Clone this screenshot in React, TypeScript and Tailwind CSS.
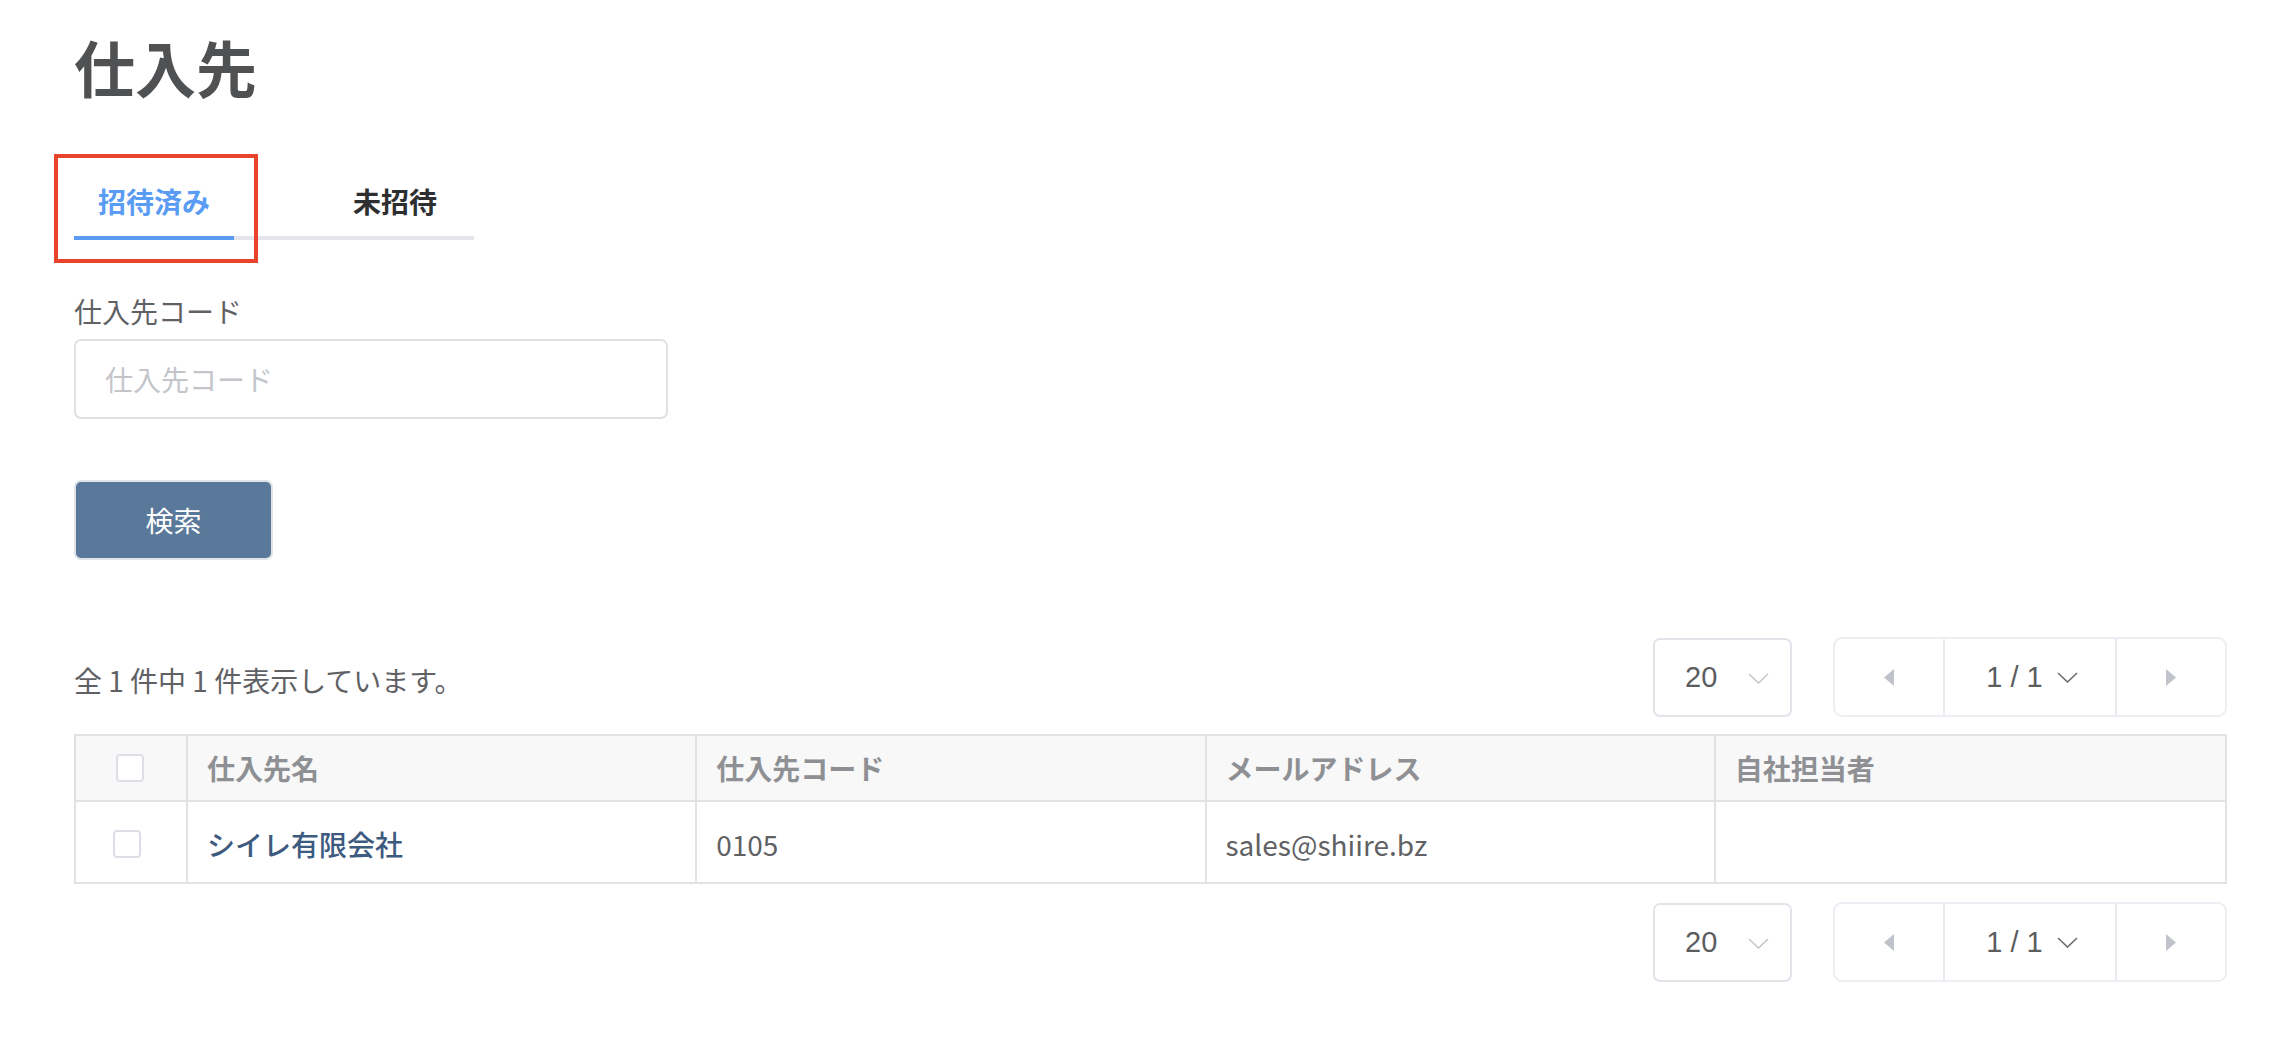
import React from "react";

const jp = { fontFamily: '"Noto Sans CJK JP", "Noto Sans", sans-serif' };

function Chevron({ color, w = 21, h = 11 }: { color: string; w?: number; h?: number }) {
  return (
    <svg width={w} height={h} viewBox="0 0 21 11" fill="none">
      <polyline points="1,1 10.5,10 20,1" stroke={color} strokeWidth="1.6" fill="none" />
    </svg>
  );
}

function Pagination() {
  return (
    <div className="flex items-center gap-[41px]" style={{ fontFamily: '"Liberation Sans", Arial, sans-serif' }}>
      <div className="flex h-[79px] w-[139px] items-center rounded-[7px] border-2 border-[#e2e4ea] pl-[30px]">
        <span className="text-[29px] leading-none text-[#5b5d61]">20</span>
        <span className="ml-[31px] mt-[2px]">
          <Chevron color="#c4c7cd" />
        </span>
      </div>
      <div className="flex h-[80px] w-[394px] overflow-hidden rounded-[9px] border-2 border-[#eceef3]">
        <div className="flex w-[108px] items-center justify-center">
          <svg width="10" height="17" viewBox="0 0 10 17">
            <polygon points="10,0 10,17 0,8.5" fill="#c0c3c9" />
          </svg>
        </div>
        <div className="-my-[2px] flex w-[174px] items-center justify-center border-x-2 border-y-2 border-x-[#e8eaef] border-y-[#dcdee4] pl-[4px]">
          <span className="text-[29px] leading-none text-[#5b5d61]">1 / 1</span>
          <span className="ml-[14px] mt-[1px]">
            <Chevron color="#6a6c70" />
          </span>
        </div>
        <div className="flex flex-1 items-center justify-center">
          <svg width="10" height="17" viewBox="0 0 10 17">
            <polygon points="0,0 10,8.5 0,17" fill="#c0c3c9" />
          </svg>
        </div>
      </div>
    </div>
  );
}

function Checkbox() {
  return <div className="h-[28px] w-[28px] rounded-[4px] border-2 border-[#dcdfe6] bg-white" />;
}

export default function App() {
  const cols = "grid grid-cols-[112px_repeat(4,minmax(0,1fr))]";
  return (
    <div className="min-h-[1038px] w-[2280px] bg-white pl-[74px] pr-[53px] pt-[36px]" style={jp}>
      <h1 className="text-[61px] font-bold leading-[62px] text-[#505153]">仕入先</h1>

      <div className="mt-[74px] flex w-[400px] border-b-4 border-[#e4e5ea]">
        <div className="relative -mb-[4px] w-[160px] border-b-4 border-[#5a9cf3] pb-[21px] pt-[15px] text-center text-[28px] font-semibold leading-[28px] text-[#5a9cf3]">
          招待済み
          <div className="pointer-events-none absolute left-[-20px] top-[-18px] h-[109px] w-[204px] border-4 border-[#e8432d]" />
        </div>
        <div className="pb-[21px] pl-[119px] pt-[15px] text-[28px] font-semibold leading-[28px] text-[#2e2f31]">未招待</div>
      </div>

      <div className="mt-[57px] text-[28px] leading-[28px] text-[#5f6164]">仕入先コード</div>
      <div className="mt-[14px] flex h-[80px] w-[594px] items-center rounded-[7px] border-2 border-[#dfe1e6] pl-[29px] text-[28px] text-[#c3c5ca]">
        仕入先コード
      </div>

      <button className="mt-[61px] flex h-[80px] w-[199px] items-center justify-center rounded-[7px] border-2 border-[#dfe2e8] bg-[#5a7899] text-[28px] text-white">
        検索
      </button>

      <div className="mt-[76px] flex h-[82px] items-center justify-between">
        <div className="pt-[5px] text-[28px] text-[#5f6164]">全 1 件中 1 件表示しています。</div>
        <Pagination />
      </div>

      <div className="mt-[16px] border-2 border-[#e2e2e4] text-[28px]">
        <div className={`${cols} h-[66px] border-b-2 border-[#e2e2e4] bg-[#f8f8f9] font-bold text-[#8e9094]`}>
          <div className="flex items-center justify-center border-r-2 border-[#e2e2e4] pr-[2px]">
            <Checkbox />
          </div>
          <div className="flex items-center border-r-2 border-[#e2e2e4] pl-[19px]">仕入先名</div>
          <div className="flex items-center border-r-2 border-[#e2e2e4] pl-[19px]">仕入先コード</div>
          <div className="flex items-center border-r-2 border-[#e2e2e4] pl-[19px]">メールアドレス</div>
          <div className="flex items-center pl-[19px]">自社担当者</div>
        </div>
        <div className={`${cols} h-[80px] text-[#5f6164]`}>
          <div className="flex items-center border-r-2 border-[#e2e2e4] pl-[37px] pt-[4px]">
            <Checkbox />
          </div>
          <div className="flex items-center border-r-2 border-[#e2e2e4] pl-[19px] pt-[4px] font-medium text-[#3d5a7f]">シイレ有限会社</div>
          <div className="flex items-center border-r-2 border-[#e2e2e4] pl-[19px] pt-[4px]">0105</div>
          <div className="flex items-center border-r-2 border-[#e2e2e4] pl-[19px] pt-[4px]">sales@shiire.bz</div>
          <div className="flex items-center pl-[19px]" />
        </div>
      </div>

      <div className="mt-[18px] flex justify-end">
        <Pagination />
      </div>
    </div>
  );
}
